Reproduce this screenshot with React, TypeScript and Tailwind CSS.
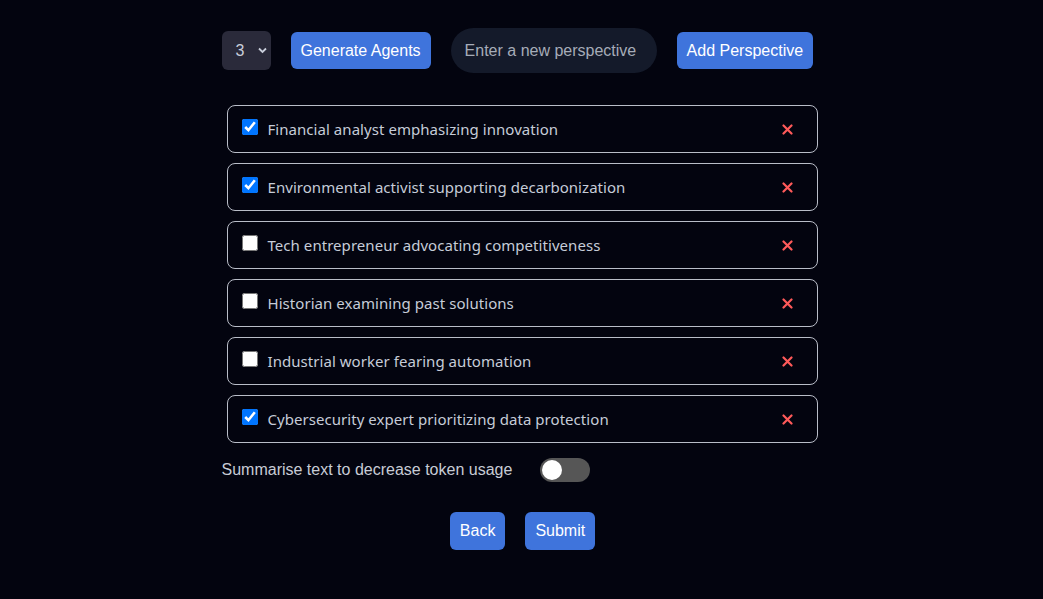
import React, { useState } from "react";

const items = [
  { label: "Financial analyst emphasizing innovation", checked: true },
  { label: "Environmental activist supporting decarbonization", checked: true },
  { label: "Tech entrepreneur advocating competitiveness", checked: false },
  { label: "Historian examining past solutions", checked: false },
  { label: "Industrial worker fearing automation", checked: false },
  { label: "Cybersecurity expert prioritizing data protection", checked: true },
];

export default function App() {
  const [list, setList] = useState(items);
  const [on, setOn] = useState(false);
  return (
    <div
      className="min-h-[599px] w-full bg-[#03040f] text-[#d0d4dc] flex flex-col items-center"
      style={{ fontFamily: '"Liberation Sans", Arial, sans-serif' }}
    >
      <div className="w-[596px] mr-[4px] pt-[28px] flex flex-col">
        <div className="flex items-center gap-5 h-[45px]">
          <div className="relative w-[49px] h-[39px] rounded-[6px] bg-[#2a2a3a] flex items-center pl-[14px] text-[16px] text-[#c9cedb]">
            <span>3</span>
            <svg className="absolute left-[36px] top-[16px]" width="9" height="7" viewBox="0 0 9 7">
              <path d="M1 1.5 L4.5 5 L8 1.5" fill="none" stroke="#c9cedb" strokeWidth="1.8" />
            </svg>
          </div>
          <button className="h-[37px] px-[10px] rounded-[6px] bg-[#3f74dc] text-white text-[16px]">
            Generate Agents
          </button>
          <div className="h-[45px] w-[206px] rounded-full bg-[#141a2a] flex items-center pl-[14px] text-[16px] text-[#a6acb8]">
            Enter a new perspective
          </div>
          <button className="h-[37px] px-[10px] rounded-[6px] bg-[#3f74dc] text-white text-[16px]">
            Add Perspective
          </button>
        </div>

        <div className="mt-[32px] ml-[5px] w-[591px] flex flex-col gap-[10px]">
          {list.map((it, i) => (
            <div
              key={i}
              className="h-[48px] rounded-[8px] border border-[#b9bdc8] flex items-center pl-[14px] pr-[24px]"
            >
              <input
                type="checkbox"
                checked={it.checked}
                onChange={() =>
                  setList(list.map((x, j) => (j === i ? { ...x, checked: !x.checked } : x)))
                }
                className="w-4 h-4 m-0 mb-[4px] accent-[#0075ff]"
              />
              <span
                className="ml-[10px] flex-1 text-[15px] tracking-[0.05px] text-[#c6ccd8]"
                style={{ fontFamily: '"Noto Sans", sans-serif' }}
              >
                {it.label}
              </span>
              <svg width="11" height="11" viewBox="0 0 11 11">
                <path d="M1.5 1.5 L9.5 9.5 M9.5 1.5 L1.5 9.5" stroke="#ff5a5a" strokeWidth="2.2" strokeLinecap="round" />
              </svg>
            </div>
          ))}
        </div>

        <div className="mt-[15px] flex items-center">
          <span className="text-[16px] text-[#c8ccd6]">Summarise text to decrease token usage</span>
          <button
            onClick={() => setOn(!on)}
            className="ml-[28px] w-[50px] h-[24px] rounded-full bg-[#565656] flex items-center px-[2px]"
          >
            <span className="w-[20px] h-[20px] rounded-full bg-white block" />
          </button>
        </div>

        <div className="mt-[30px] flex justify-center gap-5 pl-[6px]">
          <button className="h-[38px] px-[10px] rounded-[6px] bg-[#3f74dc] text-white text-[16px]">Back</button>
          <button className="h-[38px] px-[10px] rounded-[6px] bg-[#3f74dc] text-white text-[16px]">Submit</button>
        </div>
      </div>
    </div>
  );
}
